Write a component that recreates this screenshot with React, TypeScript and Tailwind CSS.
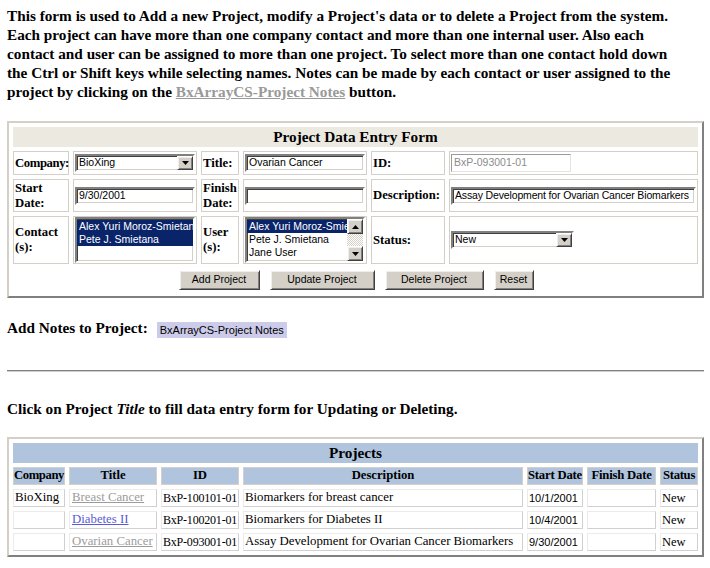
const serif = "font-['Liberation_Serif','Times_New_Roman',serif]";
const sans = "font-['Liberation_Sans',Arial,sans-serif]";

const sunken =
  'border-2 border-t-[#808080] border-l-[#808080] border-b-white border-r-white shadow-[inset_1px_1px_0_#404040,inset_-1px_-1px_0_#d4d0c8] bg-white';
const raised =
  'bg-[#d4d0c8] border border-t-white border-l-white border-b-[#404040] border-r-[#404040] shadow-[inset_1px_1px_0_#eeeeee,inset_-1px_-1px_0_#808080]';
const formCell = 'flex items-center border border-[#d4d0c8] px-[1px]';
const label = 'font-bold text-[12.7px] leading-[15px] whitespace-nowrap';

function DownArrow() {
  return (
    <svg width="7" height="4" viewBox="0 0 7 4">
      <path d="M0 0h7L3.5 4z" fill="#000" />
    </svg>
  );
}

function UpArrow() {
  return (
    <svg width="7" height="4" viewBox="0 0 7 4">
      <path d="M0 4h7L3.5 0z" fill="#000" />
    </svg>
  );
}

function TextInput({ value, width, muted, tight }: { value: string; width: string; muted?: boolean; tight?: boolean }) {
  return (
    <div
      className={`${width} h-[18px] ${
        muted
          ? 'border border-t-[#9a9a9a] border-l-[#9a9a9a] border-b-[#e4e4e4] border-r-[#e4e4e4] bg-white text-[#8c8c8c]'
          : `${sunken} text-black`
      } ${sans} flex items-center overflow-hidden whitespace-nowrap px-[2px] text-[10.5px] ${tight ? 'tracking-[-0.15px]' : ''}`}
    >
      {value}
    </div>
  );
}

function Select({ value, width }: { value: string; width: string }) {
  return (
    <div className={`${width} h-[18px] ${sunken} ${sans} flex items-center text-[10.5px]`}>
      <span className="flex-1 pl-[2px]">{value}</span>
      <span className={`${raised} flex h-[14px] w-[16px] items-center justify-center`}>
        <DownArrow />
      </span>
    </div>
  );
}

function Option({ text, selected }: { text: string; selected?: boolean }) {
  return (
    <div
      className={`h-[13px] overflow-hidden whitespace-nowrap px-[2px] leading-[13px] ${
        selected ? 'bg-[#0a246a] text-white' : 'text-black'
      }`}
    >
      {text}
    </div>
  );
}

function ButtonW({ text, width }: { text: string; width: string }) {
  return (
    <button className={`${raised} ${width} ${sans} h-[20px] text-[10.5px] text-black`}>{text}</button>
  );
}

const projects = [
  { company: 'BioXing', title: 'Breast Cancer', visited: true, id: 'BxP-100101-01', desc: 'Biomarkers for breast cancer', start: '10/1/2001' },
  { company: '', title: 'Diabetes II', visited: false, id: 'BxP-100201-01', desc: 'Biomarkers for Diabetes II', start: '10/4/2001' },
  { company: '', title: 'Ovarian Cancer', visited: true, id: 'BxP-093001-01', desc: 'Assay Development for Ovarian Cancer Biomarkers', start: '9/30/2001' },
];

export default function App() {
  const headCell = `flex items-center justify-center border border-[#d4d0c8] bg-[#b0c4de] font-bold text-[12.7px] whitespace-nowrap`;
  const dataCell =
    'flex items-center border border-t-[#ebebeb] border-l-[#ebebeb] border-b-[#d0d0d0] border-r-[#d0d0d0] whitespace-nowrap';

  return (
    <div className={`min-h-[568px] w-[710px] bg-white pl-[7px] pt-[6px] text-black ${serif}`}>
      <p className="whitespace-nowrap text-[15.25px] font-bold leading-[19px]">
        <span className="block">
          This form is used to Add a new Project, modify a Project's data or to delete a Project from the system.
        </span>
        <span className="block">
          Each project can have more than one company contact and more than one internal user. Also each
        </span>
        <span className="block">
          contact and user can be assigned to more than one project. To select more than one contact hold down
        </span>
        <span className="block">
          the Ctrl or Shift keys while selecting names. Notes can be made by each contact or user assigned to the
        </span>
        <span className="block">
          project by clicking on the <span className="text-[#999999] underline">BxArrayCS-Project Notes</span> button.
        </span>
      </p>

      {/* Project data entry form */}
      <div className="mt-[20px] w-[697px] border-2 border-t-[#d4d0c8] border-l-[#d4d0c8] border-b-[#808080] border-r-[#808080] p-[4px]">
        <div className="grid grid-cols-[56px_124px_38px_124px_74px_249px] grid-rows-[20px_24px_33px_48px_24px] gap-[4px]">
          <div className="col-span-6 flex items-center justify-center bg-[#ece9e0] text-[15.25px] font-bold">
            Project Data Entry Form
          </div>

          <div className={formCell}>
            <span className={`${label} tracking-[-0.4px]`}>Company:</span>
          </div>
          <div className={formCell}>
            <Select value="BioXing" width="w-[120px]" />
          </div>
          <div className={formCell}>
            <span className={label}>Title:</span>
          </div>
          <div className={formCell}>
            <TextInput value="Ovarian Cancer" width="w-[120px]" />
          </div>
          <div className={formCell}>
            <span className={label}>ID:</span>
          </div>
          <div className={formCell}>
            <TextInput value="BxP-093001-01" width="w-[120px]" muted />
          </div>

          <div className={formCell}>
            <span className={label}>
              Start
              <br />
              Date:
            </span>
          </div>
          <div className={formCell}>
            <TextInput value="9/30/2001" width="w-[120px]" />
          </div>
          <div className={formCell}>
            <span className={label}>
              Finish
              <br />
              Date:
            </span>
          </div>
          <div className={formCell}>
            <TextInput value="" width="w-[120px]" />
          </div>
          <div className={formCell}>
            <span className={label}>Description:</span>
          </div>
          <div className={formCell}>
            <TextInput value="Assay Development for Ovarian Cancer Biomarkers" width="w-[245px]" tight />
          </div>

          <div className={formCell}>
            <span className={label}>
              Contact
              <br />
              (s):
            </span>
          </div>
          <div className={formCell}>
            <div className={`h-[46px] w-[120px] ${sunken} ${sans} pt-[1px] text-[10.5px]`}>
              <Option text="Alex Yuri Moroz-Smietana" selected />
              <Option text="Pete J. Smietana" selected />
            </div>
          </div>
          <div className={formCell}>
            <span className={label}>
              User
              <br />
              (s):
            </span>
          </div>
          <div className={formCell}>
            <div className={`flex h-[46px] w-[120px] ${sunken} ${sans} text-[10.5px]`}>
              <div className="min-w-0 flex-1 pt-[1px]">
                <Option text="Alex Yuri Moroz-Smietana" selected />
                <Option text="Pete J. Smietana" />
                <Option text="Jane User" />
              </div>
              <div className="flex w-[16px] flex-col">
                <span className={`${raised} flex h-[15px] items-center justify-center`}>
                  <UpArrow />
                </span>
                <span className="flex-1 bg-[repeating-conic-gradient(#d4d0c8_0_25%,#ffffff_0_50%)] bg-[length:2px_2px]" />
                <span className={`${raised} flex h-[15px] items-center justify-center`}>
                  <DownArrow />
                </span>
              </div>
            </div>
          </div>
          <div className={formCell}>
            <span className={label}>Status:</span>
          </div>
          <div className={formCell}>
            <Select value="New" width="w-[123px]" />
          </div>

          <div className="col-span-6 flex items-center justify-center gap-[10px] pl-[1px]">
            <ButtonW text="Add Project" width="w-[81px]" />
            <ButtonW text="Update Project" width="w-[105px]" />
            <ButtonW text="Delete Project" width="w-[99px]" />
            <ButtonW text="Reset" width="w-[40px]" />
          </div>
        </div>
      </div>

      <div className="mt-[20px] flex h-[20px] items-start">
        <span className="text-[15.25px] font-bold leading-[19px]">Add Notes to Project:</span>
        <span
          className={`ml-[9px] mt-[4px] flex h-[16px] w-[130px] items-center justify-center bg-[#ccccea] text-[11px] ${sans}`}
        >
          BxArrayCS-Project Notes
        </span>
      </div>

      <div className="mt-[32px] w-[697px] border-t border-b border-t-[#808080] border-b-[#d0d0d0]" />

      <p className="mt-[27px] text-[15.25px] font-bold leading-[19px]">
        Click on Project <i>Title</i> to fill data entry form for Updating or Deleting.
      </p>

      {/* Projects list */}
      <div className="mt-[19px] w-[697px] border-2 border-t-[#d4d0c8] border-l-[#d4d0c8] border-b-[#808080] border-r-[#808080] p-[4px]">
        <div className="grid grid-cols-[52px_88px_78px_280px_56px_69px_38px] grid-rows-[20px_18px_18px_18px_18px] gap-[4px]">
          <div className="col-span-7 flex items-center justify-center bg-[#b0c4de] text-[15.25px] font-bold">
            Projects
          </div>
          <div className={`${headCell} tracking-[-0.4px]`}>Company</div>
          <div className={headCell}>Title</div>
          <div className={headCell}>ID</div>
          <div className={headCell}>Description</div>
          <div className={`${headCell} tracking-[-0.2px]`}>Start Date</div>
          <div className={`${headCell} tracking-[-0.2px]`}>Finish Date</div>
          <div className={`${headCell} tracking-[-0.3px]`}>Status</div>

          {projects.map((p) => (
            <div key={p.id} className="contents">
              <div className={`${dataCell} pl-[1px] text-[12.8px]`}>{p.company}</div>
              <div className={`${dataCell} pl-[2px] text-[12.8px]`}>
                <span className={`underline ${p.visited ? 'text-[#9c9c9c]' : 'text-[#5a5ad8]'}`}>{p.title}</span>
              </div>
              <div className={`${dataCell} pl-[1px] text-[12px] tracking-[-0.2px]`}>{p.id}</div>
              <div className={`${dataCell} pl-[1px] text-[12.8px]`}>{p.desc}</div>
              <div className={`${dataCell} pl-[1px] ${sans} text-[11px]`}>{p.start}</div>
              <div className={dataCell}></div>
              <div className={`${dataCell} pl-[1px] text-[12.5px]`}>New</div>
            </div>
          ))}
        </div>
      </div>
    </div>
  );
}
